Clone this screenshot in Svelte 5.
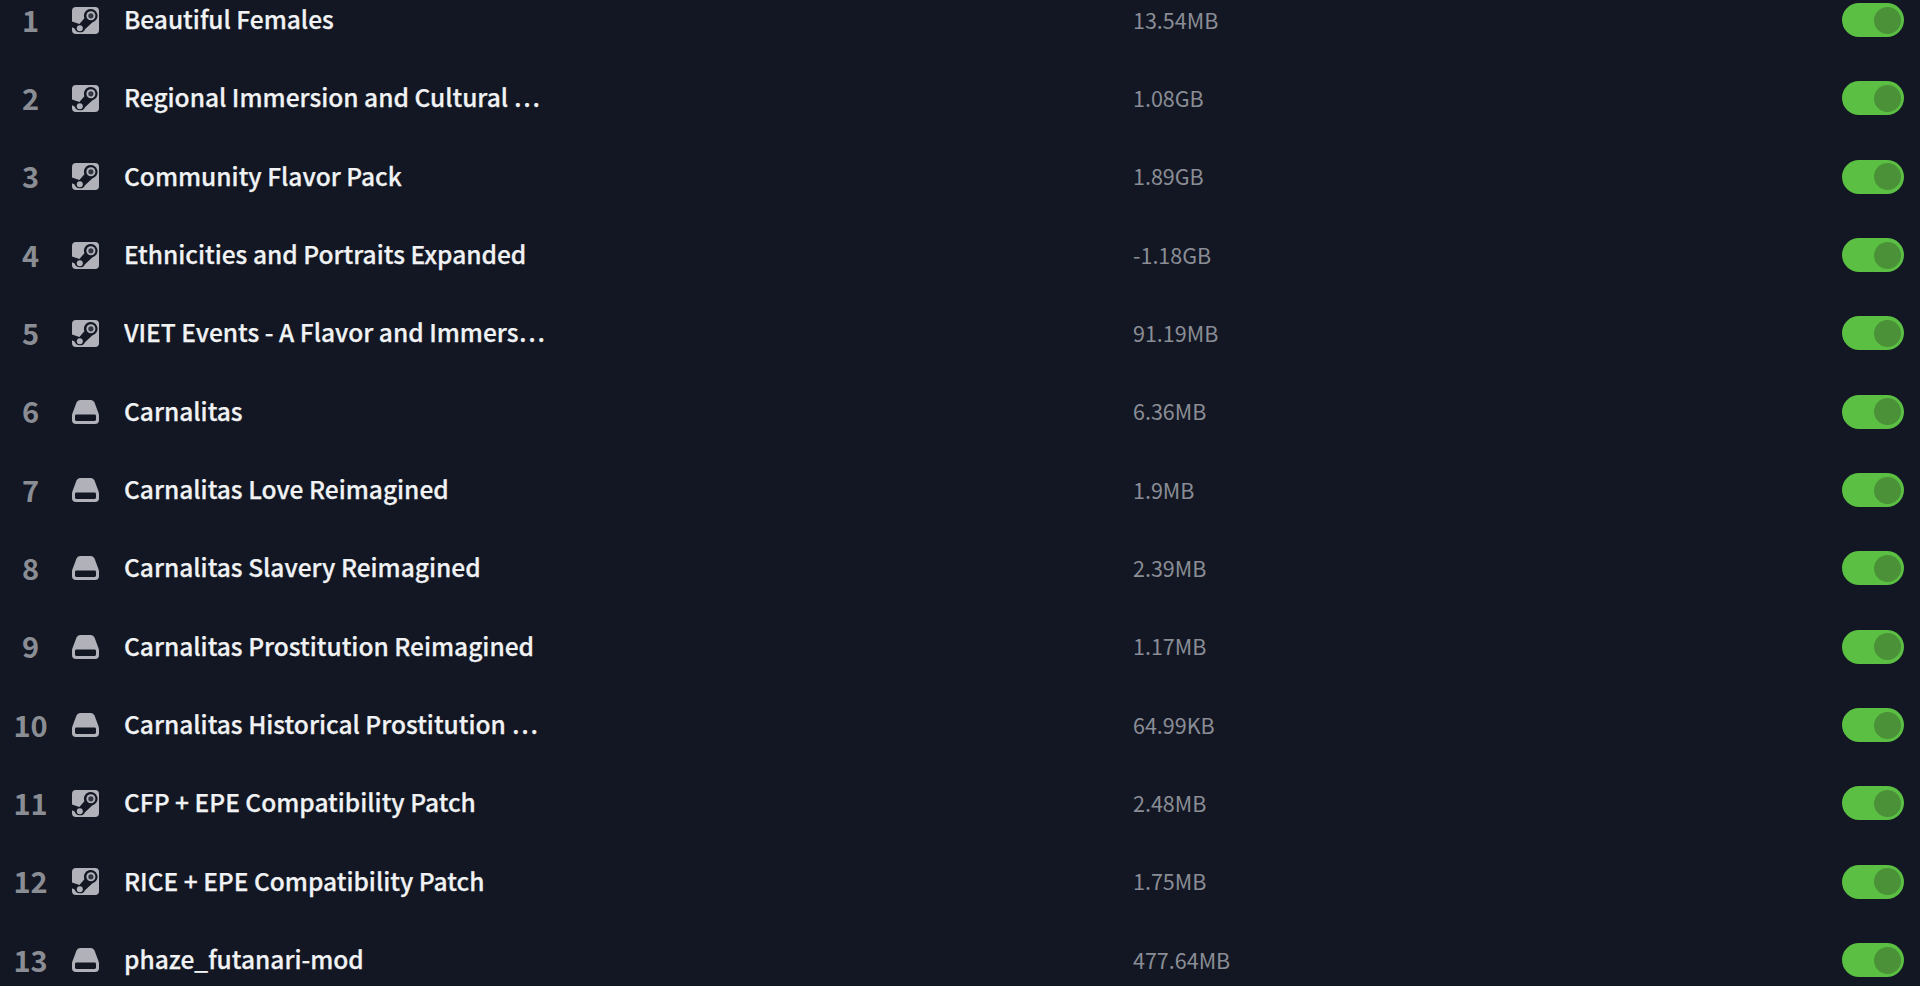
<script lang="ts">
  type Mod = { name: string; size: string; source: 'steam' | 'local'; enabled: boolean };

  let mods: Mod[] = $state([
    { name: 'Beautiful Females', size: '13.54MB', source: 'steam', enabled: true },
    { name: 'Regional Immersion and Cultural Overhaul', size: '1.08GB', source: 'steam', enabled: true },
    { name: 'Community Flavor Pack', size: '1.89GB', source: 'steam', enabled: true },
    { name: 'Ethnicities and Portraits Expanded', size: '-1.18GB', source: 'steam', enabled: true },
    { name: 'VIET Events - A Flavor and Immersion Mod', size: '91.19MB', source: 'steam', enabled: true },
    { name: 'Carnalitas', size: '6.36MB', source: 'local', enabled: true },
    { name: 'Carnalitas Love Reimagined', size: '1.9MB', source: 'local', enabled: true },
    { name: 'Carnalitas Slavery Reimagined', size: '2.39MB', source: 'local', enabled: true },
    { name: 'Carnalitas Prostitution Reimagined', size: '1.17MB', source: 'local', enabled: true },
    { name: 'Carnalitas Historical Prostitution Reimagined', size: '64.99KB', source: 'local', enabled: true },
    { name: 'CFP + EPE Compatibility Patch', size: '2.48MB', source: 'steam', enabled: true },
    { name: 'RICE + EPE Compatibility Patch', size: '1.75MB', source: 'steam', enabled: true },
    { name: 'phaze_futanari-mod', size: '477.64MB', source: 'local', enabled: true }
  ]);
</script>

<div class="viewport">
  <ul class="list">
    {#each mods as mod, i}
      <li class="row">
        <span class="index">{i + 1}</span>
        <span class="source">
          {#if mod.source === 'steam'}
            <svg width="27" height="27" viewBox="0 0 27 27">
              <rect width="27" height="27" rx="4" fill="#b1b2b9" />
              <path d="M0 14.6 L7.4 17 L12.4 11.2 A6.8 6.8 0 1 1 20.2 15.4 L13 22.2 A5.6 5.6 0 0 1 2.6 21.4 L0 20.2 Z" fill="#121723" />
              <circle cx="18.9" cy="8.8" r="4.5" fill="#b1b2b9" />
              <circle cx="18.9" cy="8.8" r="2.6" fill="#343743" />
              <circle cx="7.8" cy="21.2" r="3" fill="#b1b2b9" />
            </svg>
          {:else}
            <svg width="27" height="24" viewBox="0 0 27 24">
              <path d="M8 0 H19 Q21.5 0 22.5 2.5 L26.6 13.5 Q27 14.6 27 16 V20 Q27 24 23 24 H4 Q0 24 0 20 V16 Q0 14.6 0.4 13.5 L4.5 2.5 Q5.5 0 8 0 Z" fill="#b1b2b9" />
              <rect x="3" y="14.5" width="21" height="6.5" rx="1.4" fill="#121723" />
            </svg>
          {/if}
        </span>
        <span class="name">{mod.name}</span>
        <span class="size">{mod.size}</span>
        <button class="toggle" class:on={mod.enabled} aria-label="Toggle {mod.name}" onclick={() => (mod.enabled = !mod.enabled)}>
          <span class="knob"></span>
        </button>
      </li>
    {/each}
  </ul>
</div>

<style>
  :global(body) {
    background: #121723;
    font-family: "Noto Sans CJK JP", "Noto Sans", sans-serif;
  }

  .viewport {
    height: 986px;
    overflow: hidden;
  }

  .list {
    list-style: none;
    margin: -19px 0 0;
    padding: 0;
  }

  .row {
    display: grid;
    grid-template-columns: 61px 38px 448px 1fr 62px;
    align-items: center;
    height: 78.33px;
    padding-right: 16px;
  }

  .index {
    text-align: center;
    font-size: 29px;
    font-weight: 700;
    line-height: 1.45;
    margin-top: -3px;
    color: #8b8d94;
  }

  .source {
    display: flex;
    align-items: center;
    margin-left: 11px;
  }
  .source svg { display: block; }

  .name {
    margin-left: 25px;
    font-size: 24.5px;
    font-weight: 500;
    line-height: 1.45;
    margin-top: -3px;
    color: #f1f2f4;
    -webkit-text-stroke: 0.25px #f1f2f4;
    font-variant-east-asian: proportional-width;
    white-space: nowrap;
    overflow: hidden;
    text-overflow: ellipsis;
  }

  .size {
    margin-left: 586px;
    margin-top: -1.5px;
    font-size: 21.5px;
    line-height: 1.45;
    color: #8a8d95;
  }

  .toggle {
    display: flex;
    align-items: center;
    justify-content: flex-start;
    width: 62px;
    height: 34px;
    padding: 0 3px;
    border: 0;
    border-radius: 17px;
    background: #3a3f4b;
    cursor: pointer;
  }
  .toggle.on {
    justify-content: flex-end;
    background: #5abf43;
  }

  .knob {
    width: 27px;
    height: 27px;
    border-radius: 50%;
    background: #4a9138;
  }
</style>
